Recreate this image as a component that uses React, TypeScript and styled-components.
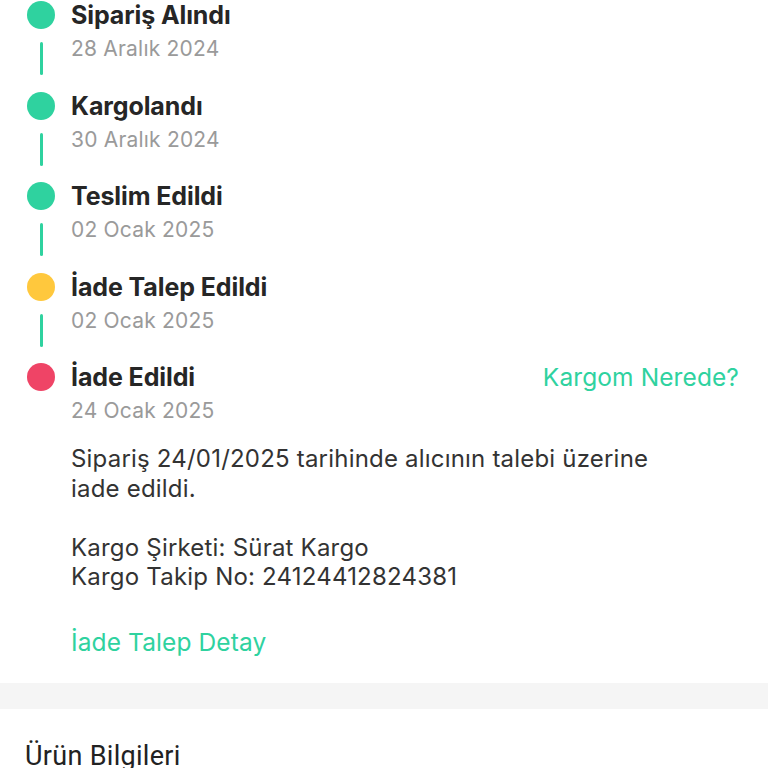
import { createGlobalStyle } from 'styled-components'
import styled from 'styled-components'

const GREEN = '#2fd29f'

const GlobalStyle = createGlobalStyle`
  body {
    margin: 0;
    background: #fff;
    font-family: Inter, "Noto Sans", sans-serif;
    -webkit-font-smoothing: antialiased;
  }
`

const Page = styled.div`
  width: 768px;
  background: #fff;
`

const Timeline = styled.div`
  display: flex;
  flex-direction: column;
`

const Step = styled.div`
  display: flex;
  gap: 16px;
  padding-left: 27px;
  padding-right: 29px;
`

const Rail = styled.div`
  width: 28px;
  display: flex;
  flex-direction: column;
  align-items: center;
  flex-shrink: 0;
`

const Dot = styled.div<{ $color: string }>`
  width: 28px;
  height: 28px;
  border-radius: 50%;
  margin-top: 1px;
  background: ${p => p.$color};
`

const Connector = styled.div`
  width: 3px;
  height: 33px;
  margin-top: 13px;
  border-radius: 2px;
  background: ${GREEN};
`

const Content = styled.div<{ $last?: boolean }>`
  flex: 1;
  padding-bottom: ${p => (p.$last ? '0' : '26.5px')};
`

const TitleRow = styled.div`
  display: flex;
  justify-content: space-between;
  align-items: center;
  height: 30px;
`

const Title = styled.div`
  font-size: 25px;
  font-weight: 700;
  color: #262626;
  letter-spacing: -0.1px;
`

const Link = styled.a`
  font-size: 24.5px;
  color: ${GREEN};
  text-decoration: none;
  letter-spacing: 0.1px;
`

const DateText = styled.div`
  margin-top: 4px;
  font-size: 21px;
  line-height: 30px;
  color: #9a9a9a;
  letter-spacing: 0.2px;
`

const Note = styled.div`
  margin-top: 18px;
  font-size: 24px;
  line-height: 29.5px;
  color: #333;
  white-space: pre-line;
  letter-spacing: 0.2px;
`

const DetailLink = styled(Link)`
  display: block;
  margin-top: 35px;
  line-height: 30px;
`

const Divider = styled.div`
  margin-top: 26px;
  height: 26px;
  background: #f5f5f5;
`

const SectionTitle = styled.div`
  padding: 32px 25px 0;
  font-family: Roboto, "Noto Sans", sans-serif;
  font-size: 27px;
  line-height: 30px;
  color: #222;
  letter-spacing: 0.3px;
`

const steps = [
  { title: 'Sipariş Alındı', date: '28 Aralık 2024', color: GREEN },
  { title: 'Kargolandı', date: '30 Aralık 2024', color: GREEN },
  { title: 'Teslim Edildi', date: '02 Ocak 2025', color: GREEN },
  { title: 'İade Talep Edildi', date: '02 Ocak 2025', color: '#ffc83d' },
  { title: 'İade Edildi', date: '24 Ocak 2025', color: '#ef4466' },
]

export default function App() {
  return (
    <Page>
      <GlobalStyle />
      <Timeline>
        {steps.map((s, i) => {
          const last = i === steps.length - 1
          return (
            <Step key={s.title}>
              <Rail>
                <Dot $color={s.color} />
                {!last && <Connector />}
              </Rail>
              <Content $last={last}>
                <TitleRow>
                  <Title>{s.title}</Title>
                  {last && <Link href="#">Kargom Nerede?</Link>}
                </TitleRow>
                <DateText>{s.date}</DateText>
                {last && (
                  <>
                    <Note>
                      {'Sipariş 24/01/2025 tarihinde alıcının talebi üzerine\niade edildi.\n\nKargo Şirketi: Sürat Kargo\nKargo Takip No: 24124412824381'}
                    </Note>
                    <DetailLink href="#">İade Talep Detay</DetailLink>
                  </>
                )}
              </Content>
            </Step>
          )
        })}
      </Timeline>
      <Divider />
      <SectionTitle>Ürün Bilgileri</SectionTitle>
    </Page>
  )
}
